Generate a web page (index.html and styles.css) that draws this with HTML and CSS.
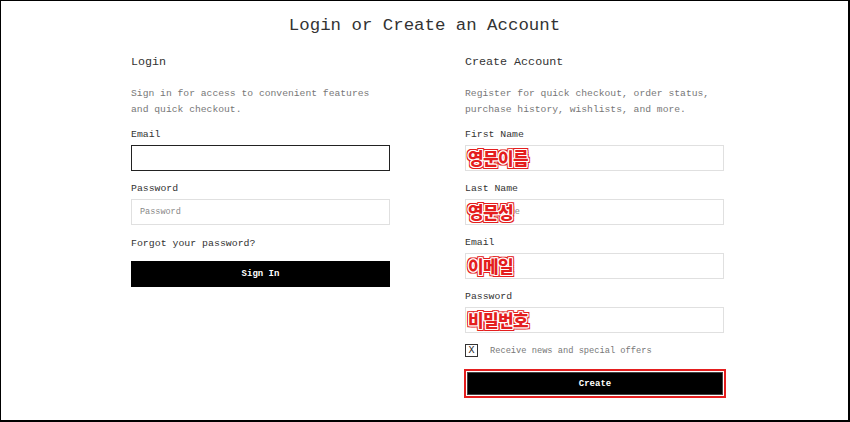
FILE: index.html
```html
<!DOCTYPE html>
<html lang="en">
<head>
<meta charset="utf-8">
<title>Login or Create an Account</title>
<link rel="stylesheet" href="styles.css">
</head>
<body>
<div class="page">
  <h1 class="title">Login or Create an Account</h1>
  <div class="columns">
    <section class="col">
      <h2 class="heading">Login</h2>
      <p class="desc">Sign in for access to convenient features<br>and quick checkout.</p>
      <div class="field">
        <label class="label">Email</label>
        <div class="box"><input class="input focused" type="text"></div>
      </div>
      <div class="field">
        <label class="label">Password</label>
        <div class="box"><input class="input" type="password" placeholder="Password"></div>
      </div>
      <a class="forgot">Forgot your password?</a>
      <button class="btn">Sign In</button>
    </section>
    <section class="col">
      <h2 class="heading">Create Account</h2>
      <p class="desc">Register for quick checkout, order status,<br>purchase history, wishlists, and more.</p>
      <div class="field">
        <label class="label">First Name</label>
        <div class="box"><input class="input" type="text" placeholder="First Name"><span class="note">영문이름</span></div>
      </div>
      <div class="field">
        <label class="label">Last Name</label>
        <div class="box"><input class="input" type="text" placeholder="Last Name"><span class="note">영문성</span></div>
      </div>
      <div class="field">
        <label class="label">Email</label>
        <div class="box"><input class="input" type="text" placeholder="Email"><span class="note">이메일</span></div>
      </div>
      <div class="field">
        <label class="label">Password</label>
        <div class="box"><input class="input" type="password" placeholder="Password"><span class="note">비밀번호</span></div>
      </div>
      <div class="check-row">
        <span class="checkbox">X</span>
        <span class="check-text">Receive news and special offers</span>
      </div>
      <div class="highlight"><button class="btn btn-create">Create</button></div>
    </section>
  </div>
</div>
</body>
</html>
```

FILE: styles.css
```css
* { box-sizing: border-box; }
html, body { margin: 0; padding: 0; background: #fff; }
body { font-family: "Liberation Mono", "Courier New", monospace; color: #333; }

.page {
  width: 850px;
  height: 422px;
  border: 1px solid #000;
  border-right-width: 2px;
  border-bottom-width: 2px;
  padding-top: 15px;
  overflow: hidden;
}

.title {
  margin: 0;
  font-weight: normal;
  font-size: 17.4px;
  line-height: 20px;
  text-align: center;
  color: #333;
}

.columns {
  display: flex;
  gap: 75px;
  padding-left: 130px;
}

.col {
  width: 259px;
  display: flex;
  flex-direction: column;
}

.heading {
  margin: 18px 0 0;
  font-weight: normal;
  font-size: 11.7px;
  line-height: 16px;
  color: #333;
}

.desc {
  margin: 16px 0 0;
  font-size: 9.7px;
  line-height: 16px;
  color: #777;
}

.field { display: flex; flex-direction: column; margin-top: 10px; }
.field + .field { margin-top: 11px; }

.label {
  font-size: 9.8px;
  line-height: 14px;
  margin-bottom: 3px;
  color: #333;
}

.box { position: relative; }

.input {
  display: block;
  width: 100%;
  height: 26px;
  border: 1px solid #e0e0e0;
  background: #fff;
  padding: 0 8px;
  font-family: "Liberation Mono", "Courier New", monospace;
  font-size: 8.5px;
  color: #333;
  outline: none;
}
.input::placeholder { color: #888; }
.input.focused { border-color: #222; }

.note {
  position: absolute;
  left: 3px;
  top: 2px;
  font-family: "Noto Sans CJK KR", sans-serif;
  font-weight: 900;
  font-size: 17px;
  line-height: 21px;
  letter-spacing: -0.6px;
  color: #e41e1e;
  text-shadow:
    1px 0 0 #fff, -1px 0 0 #fff, 0 1px 0 #fff, 0 -1px 0 #fff,
    1px 1px 0 #fff, -1px -1px 0 #fff, 1px -1px 0 #fff, -1px 1px 0 #fff,
    2px 0 0 #e41e1e, -2px 0 0 #e41e1e, 0 2px 0 #e41e1e, 0 -2px 0 #e41e1e,
    2px 2px 0 #e41e1e, -2px -2px 0 #e41e1e, 2px -2px 0 #e41e1e, -2px 2px 0 #e41e1e;
}

.forgot {
  margin-top: 12px;
  font-size: 9.9px;
  line-height: 14px;
  color: #333;
}

.btn {
  display: block;
  width: 100%;
  height: 26px;
  margin-top: 10px;
  border: 0;
  background: #000;
  color: #fff;
  font-family: "Liberation Mono", "Courier New", monospace;
  font-weight: bold;
  font-size: 9px;
  padding: 0;
}

.check-row {
  display: flex;
  align-items: center;
  margin-top: 11px;
  height: 13px;
}
.checkbox {
  width: 13px;
  height: 13px;
  border: 1px solid #333;
  display: flex;
  align-items: center;
  justify-content: center;
  font-size: 10px;
  line-height: 1;
  color: #222;
}
.check-text {
  margin-left: 12px;
  font-size: 8.7px;
  color: #777;
}

.highlight {
  margin-top: 12px;
  margin-left: -1px;
  margin-right: -2px;
  border: 2px solid #e41e1e;
  padding: 1px;
  background: #fff;
}
.btn-create {
  margin-top: 0;
  height: 23px;
  border: 1px solid #444;
}
```
